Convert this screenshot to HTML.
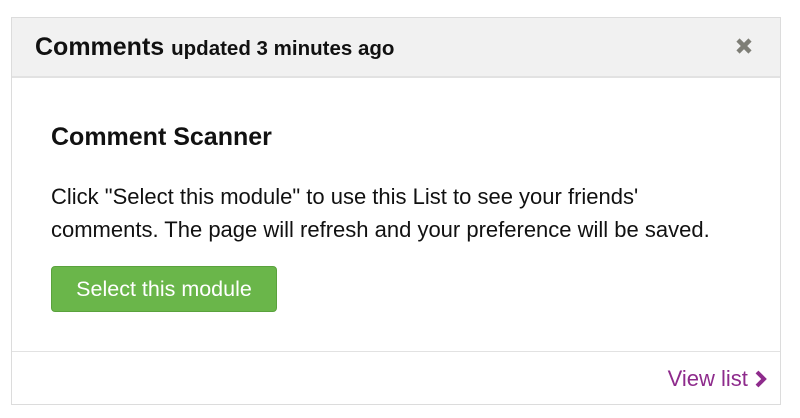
<!DOCTYPE html>
<html><head><meta charset="utf-8"><style>
body{margin:0;width:800px;height:418px;background:#fff;font-family:"Liberation Sans",Arial,sans-serif;position:relative;overflow:hidden}
.box{position:absolute;left:11px;top:17px;width:770px;height:388px;border:1px solid #dcdcdc;box-sizing:border-box}
.hd{position:absolute;left:0;top:0;right:0;height:58px;background:#f1f1f1;border-bottom:2px solid #e2e2e2}
.t{position:absolute;left:23px;top:15px;font-weight:bold;font-size:25px;color:#111;white-space:nowrap}
.t small{font-size:20.5px}
.x{position:absolute;right:27px;top:19px}
h2{position:absolute;left:39px;top:105px;margin:0;font-size:25px;color:#111;white-space:nowrap}
p{position:absolute;left:39px;top:162px;margin:0;font-size:22px;line-height:33px;color:#111;white-space:nowrap}
.btn{position:absolute;left:39px;top:248px;width:226px;height:46px;background:#6ab64a;border:1px solid #5aa23d;border-radius:4px;box-sizing:border-box;color:#fff;font-size:21.5px;line-height:44px;text-align:center}
.ft{position:absolute;left:0;right:0;top:333px;border-top:1px solid #e2e2e2}
.vl{position:absolute;right:13px;top:348px;color:#8e2b8c;font-size:22px}
</style></head><body>
<div class="box">
<div class="hd"><div class="t">Comments <small>updated 3 minutes ago</small></div>
<svg class="x" width="18" height="18" viewBox="0 0 18 18"><path d="M3 3L15 15M15 3L3 15" stroke="#7e7e76" stroke-width="4.5"/></svg></div>
<h2>Comment Scanner</h2>
<p>Click "Select this module" to use this List to see your friends'<br>comments. The page will refresh and your preference will be saved.</p>
<div class="btn">Select this module</div>
<div class="ft"></div>
<div class="vl">View list <svg width="13" height="18" viewBox="0 0 13 18" style="vertical-align:-2px"><path d="M3 2L10 9L3 16" stroke="#8e2b8c" stroke-width="4" fill="none"/></svg></div>
</div>
</body></html>
